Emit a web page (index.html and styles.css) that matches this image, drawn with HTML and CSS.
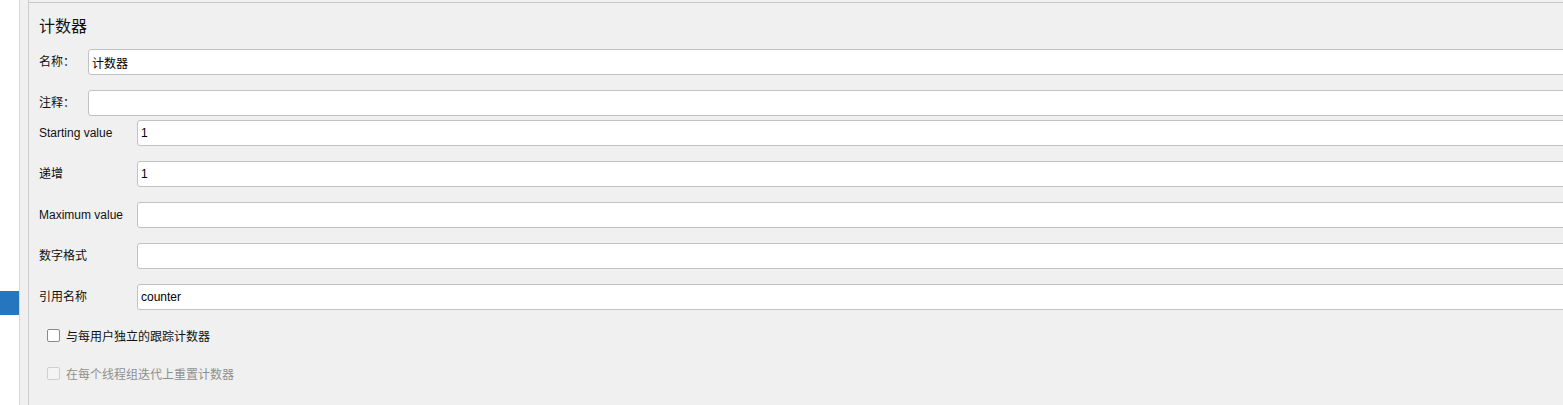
FILE: index.html
```html
<!DOCTYPE html>
<html lang="zh">
<head>
<meta charset="utf-8">
<title>计数器</title>
<link rel="stylesheet" href="styles.css">
</head>
<body>
<div class="app">
  <aside class="tree">
    <div class="tree-item selected"></div>
  </aside>
  <div class="gutter"></div>
  <main class="panel">
    <h1 class="title">计数器</h1>
    <section class="group top-group">
      <div class="row">
        <label class="label">名称：</label>
        <input class="field" type="text" value="计数器">
      </div>
      <div class="row">
        <label class="label">注释：</label>
        <input class="field" type="text" value="">
      </div>
    </section>
    <section class="group counter-group">
      <div class="row">
        <label class="label">Starting value</label>
        <input class="field" type="text" value="1">
      </div>
      <div class="row">
        <label class="label">递增</label>
        <input class="field" type="text" value="1">
      </div>
      <div class="row">
        <label class="label">Maximum value</label>
        <input class="field" type="text" value="">
      </div>
      <div class="row">
        <label class="label">数字格式</label>
        <input class="field" type="text" value="">
      </div>
      <div class="row">
        <label class="label">引用名称</label>
        <input class="field" type="text" value="counter">
      </div>
    </section>
    <div class="check first">
      <input type="checkbox" class="box">
      <span>与每用户独立的跟踪计数器</span>
    </div>
    <div class="check disabled">
      <input type="checkbox" class="box" disabled>
      <span>在每个线程组迭代上重置计数器</span>
    </div>
  </main>
</div>
</body>
</html>
```
FILE: styles.css
```css
html, body {
  margin: 0;
  padding: 0;
  height: 100%;
  background: #f0f0f0;
  overflow: hidden;
}
body {
  font-family: "Liberation Sans", "Noto Sans CJK SC", Arial, sans-serif;
  font-size: 12px;
  color: #111;
}
.app {
  display: flex;
  height: 405px;
}
.tree {
  width: 19px;
  flex: none;
  background: #fff;
  border-right: 1px solid #d6d6d6;
  padding-top: 291px;
  box-sizing: content-box;
}
.tree-item.selected {
  height: 24px;
  background: #2675bf;
}
.gutter {
  width: 8px;
  flex: none;
  background: #f0f0f0;
  border-right: 1px solid #cdcdcd;
}
.panel {
  flex: 1;
  min-width: 0;
  margin-top: 2px;
  border-top: 1px solid #c8c8c8;
  padding-left: 10px;
  overflow: hidden;
}
.title {
  margin: 12px 0 0;
  height: 20px;
  line-height: 20px;
  font-size: 16px;
  font-weight: normal;
  font-family: "Noto Sans CJK SC", sans-serif;
  color: #111;
}
.group {
  display: flex;
  flex-direction: column;
}
.top-group {
  margin-top: 14px;
  gap: 15px;
}
.counter-group {
  margin-top: 4px;
  gap: 15px;
}
.row {
  display: flex;
  align-items: center;
  height: 26px;
}
.top-group .label { width: 49px; }
.counter-group .label { width: 98px; }
.label {
  flex: none;
  font-family: "Liberation Sans", "Noto Sans CJK SC", sans-serif;
  font-size: 12px;
  color: #111;
  line-height: 16px;
}
.field {
  flex: none;
  width: 1500px;
  height: 26px;
  box-sizing: border-box;
  border: 1px solid #c2c2c2;
  border-radius: 3px;
  background: #fff;
  padding: 0 3px;
  margin: 0;
  font-family: "Liberation Sans", "Noto Sans CJK SC", sans-serif;
  font-size: 12px;
  color: #000;
  outline: none;
}
.check {
  display: flex;
  align-items: center;
  gap: 6px;
  height: 20px;
  padding-left: 8px;
  font-family: "Noto Sans CJK SC", sans-serif;
  font-size: 12px;
}
.check.first { margin-top: 15px; color: #111; }
.check.disabled { margin-top: 18px; color: #8f8f8f; }
.box {
  appearance: none;
  -webkit-appearance: none;
  width: 13px;
  height: 13px;
  margin: 0;
  border: 1px solid #8a8a8a;
  border-radius: 2px;
  background: #fff;
  box-sizing: border-box;
  flex: none;
}
.box:disabled {
  border-color: #cfcfcf;
  background: #f4f4f4;
}
```
